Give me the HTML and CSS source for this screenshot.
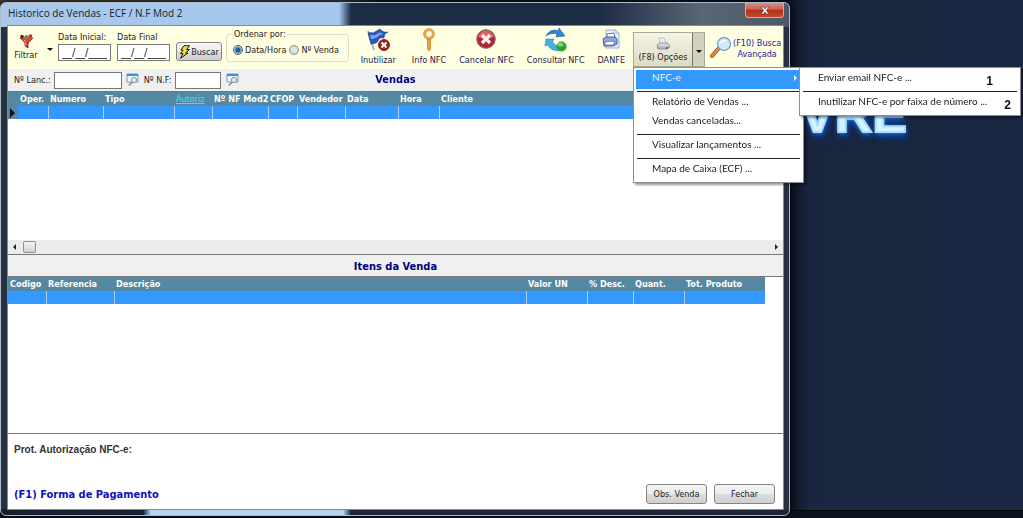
FILE: index.html
```
<!DOCTYPE html>
<html lang="pt-BR">
<head>
<meta charset="utf-8">
<title>Historico de Vendas - ECF / N.F Mod 2</title>
<link rel="stylesheet" href="styles.css">
</head>
<body>
<div class="desktop">
  <div class="wallpaper-logo" aria-hidden="true">VRE</div>
  <div class="taskbar-edge"></div>
  <main class="window">
    <header class="titlebar">
      <h1 class="title">Historico de Vendas - ECF / N.F Mod 2</h1>
      <button class="close" type="button" aria-label="Fechar janela">
        <svg width="10" height="9" viewBox="0 0 10 9"><path d="M1 1h2.500L5 3 6.500 1H9L6.400 4.500 9 8H6.500L5 6 3.500 8H1l2.600-3.500z" fill="#fff" stroke="#5b2a2a" stroke-width=".6"/></svg>
      </button>
    </header>
    <div class="client">
      <div class="toolbar">
        <button class="tool filter" type="button">
          <svg width="16" height="16" viewBox="0 0 16 16"><path d="M2 5h13l-5 5v5l-3-2v-3z" fill="#c22a20" stroke="#7d130f" stroke-width=".7"/><path d="M3 6l3-3 2 3 4-4 2 4-4 3H6z" fill="#dd4a38"/><circle cx="4" cy="3.500" r="1.800" fill="#3b3a38"/><circle cx="8.500" cy="4" r="2" fill="#3fa845"/><circle cx="12.500" cy="3" r="1.800" fill="#cf2c24"/><path d="M6 7l2 3v3" stroke="#f5a39a" fill="none"/></svg>
          <span>Filtrar</span>
        </button>
        <button class="arrow-button" type="button" aria-label="Opções de filtro"><i class="caret"></i></button>
        <div class="date-field">
          <label for="d1">Data Inicial:</label>
          <input id="d1" class="text date" type="text" value="__/__/____">
        </div>
        <div class="date-field">
          <label for="d2">Data Final</label>
          <input id="d2" class="text date" type="text" value="__/__/____">
        </div>
        <button class="button search" type="button">
          <svg width="12" height="14" viewBox="0 0 12 14"><path d="M5 .7h5.500L7.500 4.500h3L6.500 8h2.500L1.500 13.300 4 8.700H1.500L4 5H2z" fill="#f7df3c" stroke="#1c1c10" stroke-width="1"/></svg>
          <span>Buscar</span>
        </button>
        <fieldset class="order">
          <legend>Ordenar por:</legend>
          <label><input type="radio" name="order" checked>Data/Hora</label>
          <label><input type="radio" name="order">Nº Venda</label>
        </fieldset>
        <div class="actions">
          <button class="tool" type="button">
            <svg width="26" height="24" viewBox="0 0 26 24"><path d="M3 3l6 19" stroke="#9aa5bd" stroke-width="1.600"/><path d="M3 5c3-1 5 1 7-1l5-3c2 2 4 4 8 3-3 1-4 3-4 6-3-1-5 0-6 3-2 3-4 2-7 3z" fill="#2e58bd" stroke="#17388f" stroke-width=".7"/><path d="M5 7c3 0 5 1 7-1 2-1 3-2 6 0-4 0-6 5-12 5z" fill="#7fa6ee"/><circle cx="19" cy="17" r="5.500" fill="#a31d22" stroke="#6d0f14" stroke-width=".8"/><path d="M16.500 14.500l5 5m0-5l-5 5" stroke="#fff" stroke-width="2"/></svg>
            <span>Inutilizar</span>
          </button>
          <button class="tool" type="button">
            <svg width="14" height="24" viewBox="0 0 14 24"><path d="M5.500 10h3v11L7 23l-1.500-2z" fill="#e9a23e" stroke="#bd7526" stroke-width=".7"/><circle cx="7" cy="6" r="4.200" fill="#fff3d8" stroke="#e7a54a" stroke-width="2.600"/><circle cx="7" cy="6" r="5.500" fill="none" stroke="#bf7c2e" stroke-width=".5"/></svg>
            <span>Info NFC</span>
          </button>
          <button class="tool" type="button">
            <svg width="20" height="24" viewBox="0 0 20 24"><circle cx="10" cy="11" r="9.300" fill="#b5242c" stroke="#777" stroke-width="1"/><path d="M2 9a8.200 8.200 0 0 1 16 0q-8 4-16 0z" fill="#d96568"/><path d="M6 7l8 8m0-8l-8 8" stroke="#f5f1ee" stroke-width="3.200"/></svg>
            <span>Cancelar NFC</span>
          </button>
          <button class="tool" type="button">
            <svg width="24" height="24" viewBox="0 0 24 24"><path d="M2 8C5 2 11 1 14 3l1-3 6 8-9 1 1-3c-3-1-7-1-11 2z" fill="#2f86d8" stroke="#1c5fae" stroke-width=".6"/><path d="M2 11h8L8.500 14c2 3 5 4 8 4l-1 5C9 23 5 20 4 17l-3 1z" fill="#45aee5" stroke="#237bb0" stroke-width=".5"/><circle cx="17.500" cy="18.500" r="5" fill="#2da12f"/><ellipse cx="16.500" cy="16.500" rx="3" ry="2" fill="#86d36f"/></svg>
            <span>Consultar NFC</span>
          </button>
          <button class="tool" type="button">
            <svg width="20" height="24" viewBox="0 0 20 24"><path d="M5 2h10l3 3v15H5z" fill="#e9eefb" stroke="#8b9bc8" stroke-width=".8"/><path d="M15 2v3h3" fill="#fff" stroke="#8b9bc8" stroke-width=".8"/><path d="M6 6l7-1 1 5-8 1z" fill="#fff" stroke="#4b62a8" stroke-width=".9"/><path d="M2 11l3-2h9l2 2v5l-4 2H3z" fill="#8fa3dc" stroke="#3e559d" stroke-width=".9"/><path d="M4 14l9-1v4H4z" fill="#fff" stroke="#4b62a8" stroke-width=".7"/></svg>
            <span>DANFE</span>
          </button>
        </div>
        <div class="options">
          <button class="options-main" type="button">
            <svg width="16" height="14" viewBox="0 0 16 14"><path d="M4 1h5l3 6H5z" fill="#e8ebfa" stroke="#a5add2" stroke-width=".7"/><path d="M2 8l3-2h7l3 3-3 2H3z" fill="#d5d5d8" stroke="#8b8b92" stroke-width=".8"/><path d="M2 9l1 3h9l3-2" fill="#b3b3ba" stroke="#85858d" stroke-width=".8"/><circle cx="12" cy="11" r="1.200" fill="#6a6a70"/></svg>
            <span>(F8) Opções</span>
          </button>
          <button class="options-arrow" type="button" aria-label="Abrir opções"><i class="caret"></i></button>
          <ul class="menu" role="menu">
            <li class="has-sub"><button class="menu-item selected" type="button">NFC-e<i class="sub-caret"></i></button>
              <ul class="menu submenu" role="menu">
                <li><button class="menu-item" type="button">Enviar email NFC-e ...</button><b class="note first">1</b></li>
                <li class="rule"></li>
                <li><button class="menu-item" type="button">Inutilizar NFC-e por faixa de número ...</button><b class="note">2</b></li>
              </ul>
            </li>
            <li class="rule"></li>
            <li><button class="menu-item" type="button">Relatório de Vendas ...</button></li>
            <li><button class="menu-item" type="button">Vendas canceladas...</button></li>
            <li class="rule"></li>
            <li><button class="menu-item" type="button">Visualizar lançamentos ...</button></li>
            <li class="rule"></li>
            <li><button class="menu-item" type="button">Mapa de Caixa (ECF) ...</button></li>
          </ul>
        </div>
        <button class="advanced" type="button">
          <svg width="22" height="22" viewBox="0 0 22 22"><path d="M9 12l-7 8" stroke="#8f5a22" stroke-width="4" stroke-linecap="round"/><path d="M9 12l-7 8" stroke="#e08a3a" stroke-width="2.600" stroke-linecap="round"/><circle cx="14" cy="8" r="6.500" fill="#cfeaf8" stroke="#7ca6c9" stroke-width="1.400"/><path d="M10 7c1-3 5-4 7-2-3 0-5 2-7 2z" fill="#fff"/></svg>
          <span>(F10) Busca<br>Avançada</span>
        </button>
      </div>

      <div class="lookup">
        <label for="lanc">Nº Lanc.:</label>
        <input id="lanc" class="text lanc" type="text" autofocus>
        <button class="find" type="button" aria-label="Procurar lançamento"><svg width="14" height="14" viewBox="0 0 14 14"><path d="M1 1h11v8H1z" fill="#eef6fb" stroke="#7b9db8"/><path d="M1 1h11v2H1z" fill="#3f93c9"/><circle cx="8" cy="7" r="2.600" fill="#d4eefa" stroke="#7d99ab"/><path d="M6 9l-3 3.500" stroke="#8d8d70" stroke-width="1.600"/></svg></button>
        <label for="nf">Nº N.F:</label>
        <input id="nf" class="text nf" type="text">
        <button class="find" type="button" aria-label="Procurar nota"><svg width="14" height="14" viewBox="0 0 14 14"><path d="M1 1h11v8H1z" fill="#eef6fb" stroke="#7b9db8"/><path d="M1 1h11v2H1z" fill="#3f93c9"/><circle cx="8" cy="7" r="2.600" fill="#d4eefa" stroke="#7d99ab"/><path d="M6 9l-3 3.500" stroke="#8d8d70" stroke-width="1.600"/></svg></button>
        <h2 class="heading over">Vendas</h2>
      </div>

      <section class="grid sales">
        <table>
          <colgroup><col class="w-mark"><col class="w-oper"><col class="w-num"><col class="w-tipo"><col class="w-aut"><col class="w-mod"><col class="w-cfop"><col class="w-vend"><col class="w-data"><col class="w-hora"><col></colgroup>
          <thead><tr><th></th><th>Oper.</th><th>Numero</th><th>Tipo</th><th><a class="sorted" href="#">Autoriz</a></th><th>Nº NF Mod2</th><th>CFOP</th><th>Vendedor</th><th>Data</th><th>Hora</th><th>Cliente</th></tr></thead>
          <tbody><tr><td class="mark"><i class="row-caret"></i></td><td></td><td></td><td></td><td></td><td></td><td></td><td></td><td></td><td></td><td></td></tr></tbody>
        </table>
        <div class="scrollbar"><i class="left"></i><span class="thumb"></span><i class="right"></i></div>
      </section>

      <h2 class="heading items-title">Itens da Venda</h2>

      <section class="grid items">
        <table>
          <colgroup><col class="w-cod"><col class="w-ref"><col><col class="w-valor"><col class="w-desc"><col class="w-quant"><col class="w-total"></colgroup>
          <thead><tr><th>Codigo</th><th>Referencia</th><th>Descrição</th><th>Valor UN</th><th>% Desc.</th><th>Quant.</th><th>Tot. Produto</th></tr></thead>
          <tbody><tr><td></td><td></td><td></td><td></td><td></td><td></td><td></td></tr></tbody>
        </table>
      </section>

      <footer class="footer">
        <p class="protocol">Prot. Autorização NFC-e:</p>
        <div class="footer-row">
          <p class="payment">(F1) Forma de Pagamento</p>
          <button class="button wide" type="button">Obs. Venda</button>
          <button class="button wide" type="button">Fechar</button>
        </div>
      </footer>
    </div>
  </main>
</div>
</body>
</html>
```
FILE: styles.css
```
* { box-sizing: border-box; }
body { margin: 0; font: 9px/12px "DejaVu Sans Condensed", "DejaVu Sans", sans-serif; color: #222; }
h1, h2, p, ul { margin: 0; padding: 0; }
ul { list-style: none; }
button { font: inherit; color: inherit; background: none; border: 0; padding: 0; }
svg { display: block; flex: none; }

.desktop {
  position: relative;
  min-height: 100vh;
  display: flex;
  padding: 2px 233px 2px 0;
  overflow: hidden;
  background: linear-gradient(90deg, #4a4038 0, #3a4250 340px, #10141c 380px, #0d1420 788px, #19263f 810px, #1a2742 100%);
}
.wallpaper-logo {
  position: absolute;
  left: 800px;
  top: 84px;
  font: bold 52px/60px "Liberation Sans", sans-serif;
  -webkit-text-stroke: 2px #a5e0ff;
  color: #d5f4ff;
  text-shadow: 0 0 3px #58b8ff, 0 2px 5px #1767d8, 2px 5px 7px #0c3fa8;
}
.taskbar-edge {
  position: absolute;
  left: 0; right: 0; bottom: 0;
  height: 8px;
  background: #0c1220;
  border-top: 1px solid #04070c;
}
.window {
  position: relative;
  flex: 1;
  min-width: 0;
  display: flex;
  flex-direction: column;
  padding: 0 5px 5px 6px;
  border: 1px solid #aebccb;
  border-radius: 6px;
  background:
    linear-gradient(90deg, #a9c8ea 0, #a4c8f0 338px, #1d2c45 350px, #1d2c45 600px, #5b6674 700px, #4c5866 100%) top / 100% 24px no-repeat,
    linear-gradient(90deg, #16202f 0, #16202f 142px, #b4d6f5 150px, #b4d6f5 342px, #1a2636 350px) bottom / 100% 6px no-repeat,
    #26313f;
  box-shadow: 0 0 8px #000;
}
.titlebar { display: flex; justify-content: space-between; height: 22px; }
.title { padding-left: 1px; font: 10px/21px "Open Sans", "Noto Sans", sans-serif; color: #16202c; }
.close {
  display: flex;
  align-items: center;
  justify-content: center;
  width: 39px;
  height: 15px;
  border: 1px solid #d8a9a0;
  border-top: 0;
  border-radius: 0 0 4px 4px;
  background: linear-gradient(#d79185, #c5604f 45%, #b1301b 50%, #c2492f 100%);
}
.client {
  flex: 1;
  display: flex;
  flex-direction: column;
  border: 1px solid #888;
  background: #fff;
}

.toolbar { display: flex; height: 43px; background: #ffffe1; padding-left: 6px; }
.tool { display: flex; flex-direction: column; align-items: center; justify-content: space-between; white-space: nowrap; }
.filter { justify-content: flex-start; width: 24px; padding: 7px 0 0; }
.arrow-button { width: 20px; padding-left: 3px; }
.caret { display: inline-block; border: 3px solid transparent; border-top-color: #111; border-bottom: 0; }
.date-field { display: flex; flex-direction: column; gap: 1px; width: 59px; padding-top: 5px; }
.text {
  font: inherit;
  color: #111;
  height: 17px;
  padding: 0 3px;
  border: 1px solid #777;
  background: #fff;
  border-radius: 0;
  outline: 0;
}
.date { width: 53px; font-size: 11px; }
.button {
  display: flex;
  align-items: center;
  justify-content: center;
  border: 1px solid #858585;
  border-radius: 3px;
  background: linear-gradient(#f4f4f4 0, #ececec 48%, #dcdcdc 52%, #cfcfcf 100%);
}
.search { width: 46px; height: 19px; margin: 16px 4px 0 0; }
.order {
  display: flex;
  align-items: center;
  gap: 3px;
  width: 123px;
  height: 34px;
  margin: 2px 0 0;
  padding: 0 5px 2px 6px;
  border: 1px solid #dedec8;
  border-radius: 3px;
}
.order legend { padding: 0 1px; }
.order label { display: flex; align-items: center; gap: 2px; white-space: nowrap; }
.order input {
  appearance: none;
  width: 10px;
  height: 10px;
  margin: 0;
  border: 1px solid #8a8f94;
  border-radius: 50%;
  background: radial-gradient(#eee, #ccc);
}
.order input:checked { border-color: #49555f; background: radial-gradient(#1f5f94 0 2px, #dcebf2 4px); }
.actions { display: flex; flex: 1; justify-content: flex-end; gap: 13px; padding: 2px 8px 3px 0; color: #1c1c50; }
.actions .tool:first-child { margin-right: 3px; }
.options { position: relative; display: flex; flex: none; width: 72px; margin: 6px 5px 2px 0; border: 1px solid #aaa898; background: linear-gradient(#f6f5e2, #dbdac6); }
.options-main { flex: 1; display: flex; flex-direction: column; align-items: center; justify-content: space-between; padding: 4px 0 3px; white-space: nowrap; }
.options-arrow { width: 12px; background: #d2d1ba; border-left: 1px solid #77766a; }
.advanced { display: flex; gap: 1px; width: 73px; padding: 7px 0 0; color: #23239b; white-space: nowrap; line-height: 11px; }
.advanced svg { margin-top: 3px; }
.advanced span { padding-top: 5px; }

.menu {
  position: absolute;
  z-index: 2;
  top: 34px;
  left: -1px;
  width: 171px;
  padding: 2px;
  border: 1px solid #8f8f8f;
  background: #fff;
  box-shadow: 2px 2px 2px #0006;
  font: 10px/15px Lato, "Open Sans", sans-serif;
}
.menu li { display: flex; position: relative; }
.menu-item { display: flex; flex: 1; align-items: center; justify-content: space-between; height: 19px; padding: 0 4px 4px 16px; white-space: nowrap; }
.selected { background: #3399ff; color: #e4f2ff; }
.sub-caret { border: 3px solid transparent; border-left-color: #fff; border-right: 0; }
.menu .rule { height: 1px; margin: 2px 1px; background: #222; }
.submenu { top: -3px; left: 163px; width: 222px; }
.note { position: absolute; right: 7px; top: 2px; font: bold 12px/18px "Liberation Sans", sans-serif; color: #111; }
.first { right: 25px; }

.lookup { position: relative; display: flex; align-items: center; height: 23px; padding: 0 6px; background: #f0f0f0; border-bottom: 1px solid #777; }
.lanc { width: 68px; margin: 0 4px 0 3px; }
.nf { width: 46px; margin: 0 5px 0 3px; }
.find { margin-right: 4px; }
.heading { font: bold 11px/20px "DejaVu Sans Condensed", "DejaVu Sans", sans-serif; color: #000080; text-align: center; }
.over { position: absolute; inset: 0; padding-top: 1px; pointer-events: none; }

.grid { display: flex; flex-direction: column; border-bottom: 1px solid #777; }
.sales { flex: 163; }
.items { flex: 157; }
table { table-layout: fixed; width: 100%; border-collapse: collapse; }
th { height: 14px; padding: 0 0 0 2px; background: #5588a3; color: #fff; text-align: left; white-space: nowrap; font: bold 9px/14px "DejaVu Sans Condensed", "DejaVu Sans", sans-serif; }
td { height: 13px; padding: 0; background: #3399ff; border-right: 1px solid #a9d0f5; }
td:last-child { border-right: 0; }
.mark { background: #5588a3; border: 0; }
.row-caret { display: block; margin-left: 2px; width: 0; border: 5px solid transparent; border-left-color: #111; border-right: 0; }
.sorted { color: #3fe0e8; font-weight: normal; }
.w-mark { width: 10px; } .w-oper { width: 30px; } .w-num { width: 55px; } .w-tipo { width: 71px; }
.w-aut { width: 38px; } .w-mod { width: 56px; } .w-cfop { width: 29px; } .w-vend { width: 48px; }
.w-data { width: 53px; } .w-hora { width: 41px; }
.w-cod { width: 38px; } .w-ref { width: 68px; } .w-valor { width: 61px; } .w-desc { width: 46px; }
.w-quant { width: 51px; } .w-total { width: 81px; }
.items table { width: calc(100% - 18px); }
.scrollbar { display: flex; align-items: center; height: 14px; margin-top: auto; padding: 0 5px; background: #ececec; }
.scrollbar i { border: 3px solid transparent; }
.scrollbar .left { border-right-color: #222; border-left: 0; }
.scrollbar .right { border-left-color: #222; border-right: 0; margin-left: auto; }
.thumb { width: 13px; height: 12px; margin-left: 7px; border: 1px solid #909090; border-radius: 2px; background: linear-gradient(#f5f5f5, #d2d2d2); }
.items-title { height: 22px; padding-top: 2px; background: #f0f0f0; border-bottom: 1px solid #777; }

.footer { display: flex; flex-direction: column; justify-content: space-between; height: 75px; padding: 9px 8px 5px 6px; }
.protocol { font: bold 10px/14px "Liberation Sans", sans-serif; color: #333; }
.footer-row { display: flex; align-items: center; gap: 7px; }
.payment { flex: 1; padding-top: 2px; font: bold 11px/18px "DejaVu Sans Condensed", "DejaVu Sans", sans-serif; color: #1010c0; }
.wide { width: 61px; height: 20px; }
```
